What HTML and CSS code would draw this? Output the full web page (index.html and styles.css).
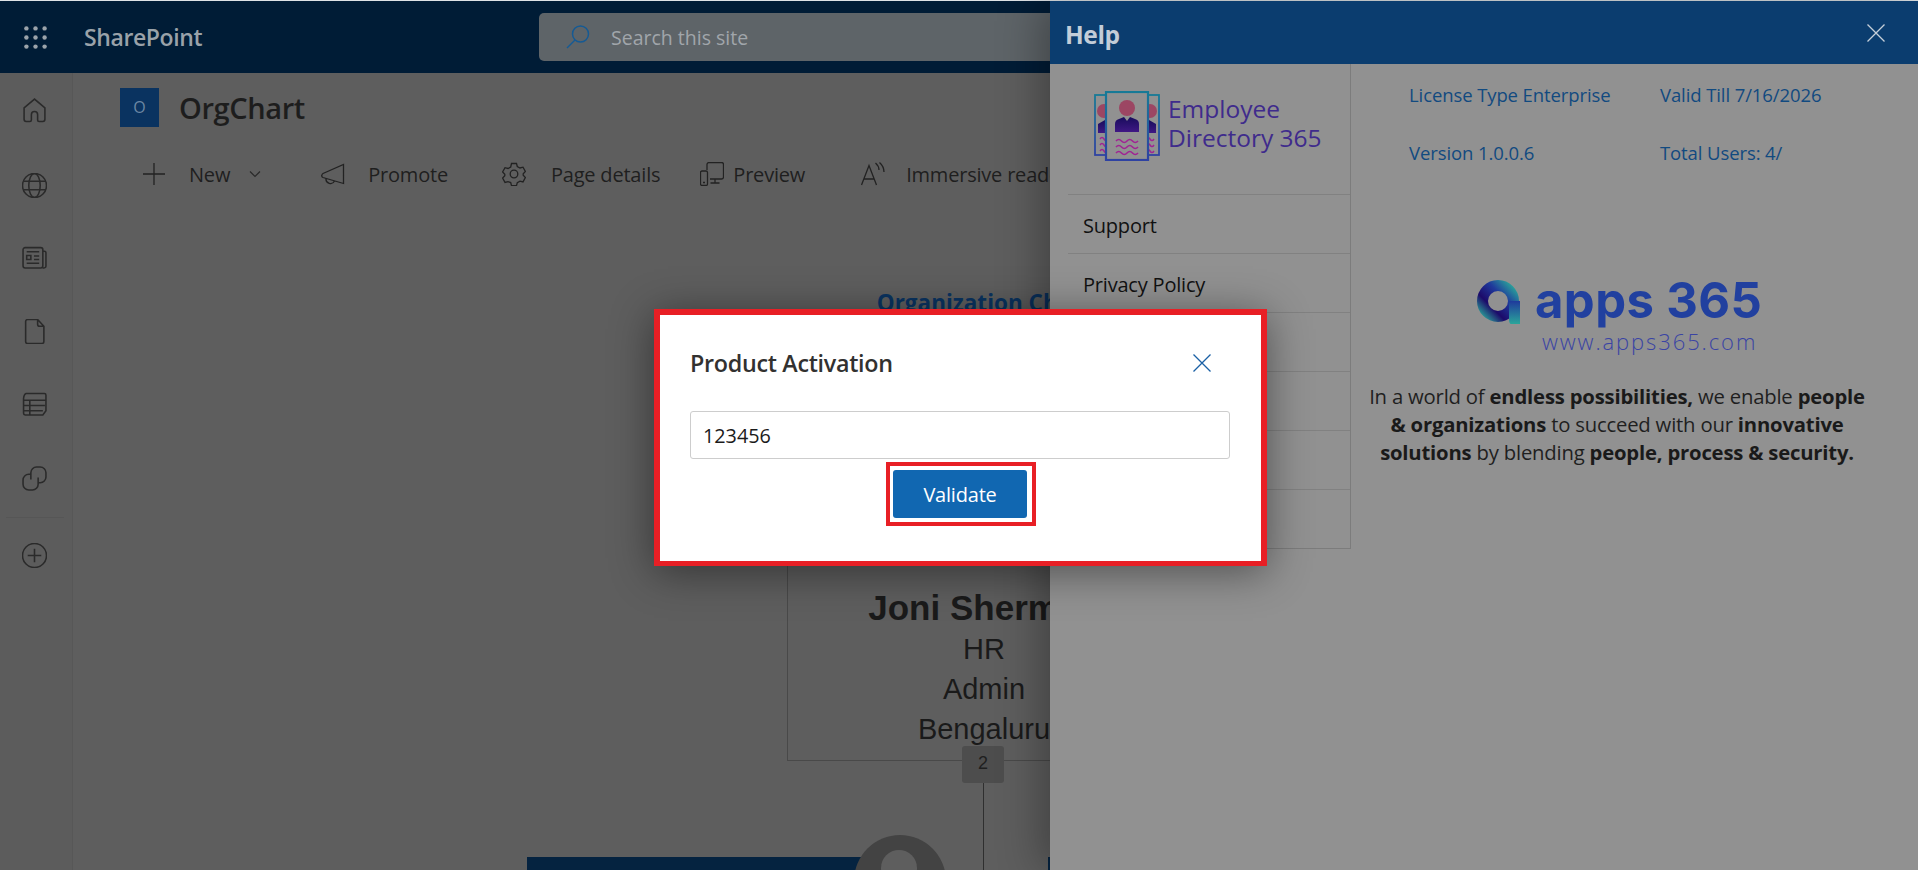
FILE: index.html
```html
<!DOCTYPE html>
<html lang="en">
<head>
<meta charset="utf-8">
<title>OrgChart</title>
<link rel="stylesheet" href="styles.css">
</head>
<body>
<div class="app">
  <header class="topbar">
    <svg class="waffle" viewBox="0 0 24 24"><g fill="currentColor"><circle cx="2.5" cy="2.5" r="2.3"/><circle cx="12" cy="2.5" r="2.3"/><circle cx="21.5" cy="2.5" r="2.3"/><circle cx="2.5" cy="12" r="2.3"/><circle cx="12" cy="12" r="2.3"/><circle cx="21.5" cy="12" r="2.3"/><circle cx="2.5" cy="21.5" r="2.3"/><circle cx="12" cy="21.5" r="2.3"/><circle cx="21.5" cy="21.5" r="2.3"/></g></svg>
    <span class="brand">SharePoint</span>
    <div class="search">
      <svg class="search-icon" viewBox="0 0 24 24" fill="none" stroke="currentColor" stroke-width="1.5"><circle cx="14.5" cy="9" r="8"/><path d="M9 15 1 23"/></svg>
      <span>Search this site</span>
    </div>
  </header>
  <div class="workspace">
    <nav class="rail">
      <div class="rail-item"><svg viewBox="0 0 24 24"><path d="M12 1 2 9.5V20.5a2 2 0 0 0 2 2h3.6a1.4 1.4 0 0 0 1.4-1.4V16a3 3 0 0 1 6 0v5.1a1.4 1.4 0 0 0 1.4 1.4H20a2 2 0 0 0 2-2V9.5Z"/></svg></div>
      <div class="rail-item rail-globe"><svg viewBox="0 0 24 24"><circle cx="12" cy="12" r="11.5"/><ellipse cx="12" cy="12" rx="5.5" ry="11.5"/><path d="M1.5 8h21M1.5 16h21"/></svg></div>
      <div class="rail-item"><svg viewBox="0 0 24 24"><path d="M3 2.500h15a2 2 0 0 1 2 2V20a2 2 0 0 1-2 2H3a2 2 0 0 1-2-2V4.500a2 2 0 0 1 2-2ZM20 6h1.500A1.500 1.500 0 0 1 23 7.500V20a2 2 0 0 1-3 1.800M4.500 6.500h12M4.500 10h4v4h-4ZM11.500 10.500h5M11.500 14h5M4.500 17.500h12"/></svg></div>
      <div class="rail-item"><svg viewBox="0 0 24 24"><path d="M5.500 0.500H15L21 7V21.500a2 2 0 0 1-2 2H5.500a2 2 0 0 1-2-2V2.500a2 2 0 0 1 2-2ZM15 0.500V5a2 2 0 0 0 2 2h4"/></svg></div>
      <div class="rail-item"><svg viewBox="0 0 24 24"><path d="M4 1.500h17.500A1.500 1.500 0 0 1 23 3V18l-3 4H3a1.500 1.500 0 0 1-1.500-1.500V6Q2 2 4 1.500ZM1.500 8H23M1.500 13H22M1.500 18H20M7.500 8V22"/></svg></div>
      <div class="rail-item"><svg viewBox="0 0 24 24"><path d="M8.500 13V6.500A5.500 5.500 0 0 1 14 1h3.500A5.500 5.500 0 0 1 23 6.500v4A5.500 5.500 0 0 1 17.500 16H15M15.500 11v6.500A5.500 5.500 0 0 1 10 23H6.500A5.500 5.500 0 0 1 1 17.500v-4A5.500 5.500 0 0 1 6.500 8H9"/></svg></div>
      <div class="rail-sep"></div>
      <div class="rail-item"><svg viewBox="0 0 24 24"><circle cx="12" cy="12" r="11.500"/><path d="M12 5.500v13M5.500 12h13"/></svg></div>
    </nav>
    <main class="main">
      <div class="site-head">
        <div class="site-logo">O</div>
        <h1 class="site-title">OrgChart</h1>
      </div>
      <div class="cmdbar">
        <div class="cmd cmd-new">
          <svg class="cmd-icon" viewBox="0 0 24 24"><path d="M12 1v22M1 12h22"/></svg>
          <span>New</span>
          <svg class="chev" viewBox="0 0 12 12"><path d="M1 3.500 6 8.500 11 3.500"/></svg>
        </div>
        <div class="cmd cmd-promote">
          <svg class="cmd-icon" viewBox="0 0 24 24"><path d="M22.500 2.500V21.500L2 15.500Q.5 15 .8 13.500 1 12 2 11.500ZM5 16.500A4.500 4.500 0 0 0 13.500 19"/></svg>
          <span>Promote</span>
        </div>
        <div class="cmd cmd-details">
          <svg class="cmd-icon" viewBox="0 0 24 24"><circle cx="12" cy="12" r="3.800"/><path d="M9.500 1.500h5l.8 3 2.700 1.500 3-.8 2.400 4.300-2.200 2.300v1.500l2.200 2.300-2.400 4.300-3-.8-2.700 1.500-.8 3h-5l-.8-3L6 19.600l-3 .8L.6 16.100l2.200-2.300v-1.500L.6 10l2.400-4.300 3 .8 2.700-1.500Z"/></svg>
          <span>Page details</span>
        </div>
        <div class="cmd cmd-preview">
          <svg class="cmd-icon" viewBox="0 0 24 24"><path d="M7 8V2.500a2 2 0 0 1 2-2h12.500a2 2 0 0 1 2 2V15a2 2 0 0 1-2 2H10M15 17v4M10.500 21h9M2 9h4a1.500 1.500 0 0 1 1.500 1.500V22A1.500 1.500 0 0 1 6 23.500H2A1.500 1.500 0 0 1 .5 22V10.500A1.500 1.500 0 0 1 2 9ZM3 20.500h2"/></svg>
          <span>Preview</span>
        </div>
        <div class="cmd cmd-reader">
          <svg class="cmd-icon" viewBox="0 0 24 24"><path d="M.5 23 8 3.500 15.500 23M3 17h10M14.500 1q3.500 3 3.500 7M18.500 .5q4.500 4 4.500 9.500"/></svg>
          <span>Immersive reader</span>
        </div>
      </div>
      <section class="chart">
        <h2 class="chart-title">Organization Chart</h2>
        <div class="node-root">
          <div class="node-name">Joni Sherman</div>
          <div class="node-line">HR</div>
          <div class="node-line">Admin</div>
          <div class="node-line">Bengaluru</div>
          <div class="badge">2</div>
        </div>
        <div class="connector"></div>
        <div class="child-bar"></div>
        <div class="child-bar-next"></div>
        <svg class="avatar" viewBox="0 0 92 92"><circle cx="46" cy="46" r="46" fill="#434343"/><circle cx="45" cy="33" r="18" fill="#5e5e5e"/></svg>
      </section>
    </main>
  </div>

  <aside class="panel">
    <div class="panel-head">
      <span class="panel-title">Help</span>
      <svg class="panel-close" viewBox="0 0 18 18"><path d="M.5.5 17.500 17.500M17.500.5.5 17.500"/></svg>
    </div>
    <div class="panel-body">
      <div class="panel-menu">
        <div class="product">
          <svg class="product-icon" viewBox="0 0 66 70">
            <defs>
              <linearGradient id="frame" x1="0" y1="0" x2="0" y2="1"><stop offset="0" stop-color="#177a96"/><stop offset="1" stop-color="#2f42a2"/></linearGradient>
              <linearGradient id="suit" x1="0" y1="0" x2="0" y2="1"><stop offset="0" stop-color="#180c5c"/><stop offset="1" stop-color="#3f1884"/></linearGradient>
            </defs>
            <rect x="1" y="4" width="52" height="60" fill="none" stroke="url(#frame)" stroke-width="1.800"/>
            <rect x="13" y="4" width="52" height="60" fill="none" stroke="url(#frame)" stroke-width="1.800"/>
            <path d="M4 42V33l7-4 4 0v13ZM62 42V33l-7-4-4 0v13Z" fill="url(#suit)"/>
            <circle cx="10" cy="20" r="7" fill="#9c4663"/><circle cx="56" cy="20" r="7" fill="#9c4663"/>
            <path d="M6 48q2-3 4 0t4 0M6 54q2-3 4 0t4 0M6 60q2-3 4 0t4 0M52 48q2-3 4 0t4 0M52 54q2-3 4 0t4 0M52 60q2-3 4 0t4 0" fill="none" stroke="#a02494" stroke-width="1.500"/>
            <rect x="12" y="1" width="42" height="68" fill="#919191" stroke="url(#frame)" stroke-width="2.200"/>
            <circle cx="33" cy="17" r="8" fill="#9c4663"/>
            <path d="M21 41V33q0-4 4-5l5-2 3 4 3-4 5 2q4 1 4 5v8Z" fill="url(#suit)"/>
            <path d="M22 50q2.750-3 5.500 0t5.500 0 5.500 0 5.500 0M22 56q2.750-3 5.500 0t5.500 0 5.500 0 5.500 0M22 62q2.750-3 5.500 0t5.500 0 5.500 0 5.500 0" fill="none" stroke="#a02494" stroke-width="1.600"/>
          </svg>
          <div class="product-name">Employee<br>Directory 365</div>
        </div>
        <div class="menu-row">Support</div>
        <div class="menu-row">Privacy Policy</div>
        <div class="menu-row"></div>
        <div class="menu-row"></div>
        <div class="menu-row"></div>
        <div class="menu-row"></div>
      </div>
      <div class="panel-info">
        <div class="license">
          <span>License Type Enterprise</span>
          <span>Valid Till 7/16/2026</span>
          <span>Version 1.0.0.6</span>
          <span>Total Users: 4/</span>
        </div>
        <div class="apps-logo">
          <svg class="apps-mark" viewBox="0 0 44 44">
            <defs>
              <linearGradient id="ring" x1="1" y1="0" x2="0" y2="1"><stop offset="0" stop-color="#2aa59a"/><stop offset=".35" stop-color="#1f3a9c"/><stop offset=".7" stop-color="#1c0a6a"/><stop offset="1" stop-color="#2a9a96"/></linearGradient>
              <linearGradient id="tail" x1="0" y1="0" x2="0" y2="1"><stop offset="0" stop-color="#1f3a9c"/><stop offset="1" stop-color="#2aa59a"/></linearGradient>
            </defs>
            <circle cx="21" cy="21" r="15.500" fill="none" stroke="url(#ring)" stroke-width="11"/>
            <path d="M32 21H43V44H34Q32 44 32 38Z" fill="url(#tail)"/>
          </svg>
          <div class="apps-text">
            <div class="apps-word">apps 365</div>
            <div class="apps-url">www.apps365.com</div>
          </div>
        </div>
        <p class="tagline">In a world of <b>endless possibilities,</b> we enable <b>people &amp; organizations</b> to succeed with our <b>innovative solutions</b> by blending <b>people, process &amp; security.</b></p>
      </div>
    </div>
  </aside>

  <div class="dialog">
    <div class="dialog-head">
      <span class="dialog-title">Product Activation</span>
      <svg class="dialog-close" viewBox="0 0 18 18"><path d="M.5.5 17.500 17.500M17.500.5.5 17.500"/></svg>
    </div>
    <div class="key-input">123456</div>
    <div class="validate-mark"><button class="validate">Validate</button></div>
  </div>
</div>
</body>
</html>
```

FILE: styles.css
```css
* { box-sizing: border-box; }
html, body { margin: 0; padding: 0; }
body {
  width: 1918px;
  height: 870px;
  overflow: hidden;
  background: #dfe3e6;
  font-family: "Open Sans", "Noto Sans", sans-serif;
}
.app {
  position: relative;
  width: 1918px;
  height: 870px;
  padding-top: 1px;
  overflow: hidden;
}
.topbar {
  height: 72px;
  background: #001c36;
  display: flex;
  align-items: center;
  padding-left: 24px;
  color: #9fa7ae;
}
.waffle { width: 23px; height: 23px; color: #9ba3aa; flex: none; }
.brand {
  margin-left: 37px;
  font-size: 23px;
  font-weight: 600;
  letter-spacing: -0.4px;
  color: #9aa2a9;
  width: 118px;
}
.search {
  margin-left: 337px;
  width: 700px;
  height: 48px;
  background: #5e6468;
  border-radius: 5px;
  display: flex;
  align-items: center;
  padding-left: 27px;
  gap: 21px;
  font-size: 19.500px;
  color: #a1a6ab;
}
.search-icon { width: 24px; height: 24px; color: #155a94; flex: none; }
.workspace {
  display: flex;
  height: 797px;
  background: #5e5e5e;
}
.rail {
  width: 73px;
  flex: none;
  background: #5c5c5c;
  border-right: 1px solid #575757;
}
.rail-item {
  height: 73.6px;
  display: flex;
  align-items: center;
  justify-content: center;
  padding: 1px 3px 0 0;
}
.rail-globe { padding-top: 4px; }
.rail-item svg {
  width: 25px;
  height: 25px;
  fill: none;
  stroke: #2a2a2a;
  stroke-width: 1.500;
}
.rail-sep {
  height: 1px;
  margin: 2.500px 8px 0 6px;
  background: #565656;
}
.main { flex: 1; min-width: 0; }
.site-head {
  display: flex;
  align-items: center;
  padding: 14px 0 0 47px;
}
.site-logo {
  width: 39px;
  height: 39px;
  background: #0a3360;
  color: #6c87a3;
  font-size: 16px;
  display: flex;
  align-items: center;
  justify-content: center;
}
.site-title {
  margin: 1px 0 0 20px;
  font-size: 29px;
  line-height: 39px;
  font-weight: 600;
  letter-spacing: -0.4px;
  color: #1d1d1d;
}
.cmdbar {
  display: flex;
  align-items: center;
  height: 24px;
  margin-top: 35px;
  margin-bottom: 1px;
  padding-left: 69px;
  font-size: 20px;
  letter-spacing: -0.2px;
  color: #1f1f1f;
  white-space: nowrap;
}
.cmd { display: flex; align-items: center; flex: none; }
.cmd-icon {
  width: 24px;
  height: 24px;
  fill: none;
  stroke: #222;
  stroke-width: 1.300;
  flex: none;
}
.chev {
  width: 12px;
  height: 12px;
  margin-left: 19px;
  fill: none;
  stroke: #2a2a2a;
  stroke-width: 1.200;
}
.cmd-new span { margin-left: 23px; }
.cmd-promote { margin-left: 60px; }
.cmd-promote span { margin-left: 23px; }
.cmd-details { margin-left: 54px; }
.cmd-details span { margin-left: 25px; }
.cmd-preview { margin-left: 40px; }
.cmd-preview span { margin-left: 9px; }
.cmd-reader { margin-left: 56px; }
.cmd-reader span { margin-left: 21px; }

/* organisation chart: a free diagram canvas */
.chart {
  position: relative;
  height: 683px;
  overflow: hidden;
}
.chart-title {
  position: absolute;
  left: 714px;
  top: 102px;
  width: 394px;
  margin: 0;
  text-align: center;
  font-size: 22.500px;
  font-weight: 700;
  color: #0a3360;
  line-height: 28px;
}
.node-root {
  position: absolute;
  left: 714px;
  top: 233px;
  width: 394px;
  height: 341px;
  border: 1px solid #494949;
  font-family: "Liberation Sans", Arial, sans-serif;
  text-align: center;
  color: #1a1a1a;
  padding-top: 167px;
}
.node-name { font-size: 35px; font-weight: 700; line-height: 40px; margin-bottom: 1px; }
.node-line { font-size: 29px; line-height: 40px; }
.badge {
  position: absolute;
  left: 174px;
  top: 325px;
  width: 42px;
  height: 37px;
  background: #4d4d4d;
  border-radius: 3px;
  font-size: 18px;
  line-height: 34px;
  color: #1f1f1f;
}
.connector {
  position: absolute;
  left: 910px;
  top: 596px;
  bottom: 0;
  width: 1px;
  background: #2f2f2f;
}
.child-bar {
  position: absolute;
  left: 454px;
  top: 670px;
  width: 380px;
  height: 20px;
  background: #052340;
}
.child-bar-next {
  position: absolute;
  left: 975px;
  top: 670px;
  width: 100px;
  height: 20px;
  background: #052340;
}
.avatar {
  position: absolute;
  left: 781px;
  top: 648px;
  width: 92px;
  height: 92px;
}

/* help panel */
.panel {
  position: absolute;
  left: 1050px;
  top: 1px;
  right: 0;
  bottom: 0;
  background: #919191;
  box-shadow: -10px 0 40px rgba(0, 0, 0, .3);
  display: flex;
  flex-direction: column;
}
.panel-head {
  height: 63px;
  flex: none;
  background: #0b3d6f;
  display: flex;
  align-items: center;
  justify-content: space-between;
  padding: 3px 33px 0 15px;
}
.panel-title {
  font-size: 24.500px;
  font-weight: 700;
  letter-spacing: -0.4px;
  color: #c3cdd8;
}
.panel-close { width: 18px; height: 18px; margin-top: -3px; fill: none; stroke: #c5cfd9; stroke-width: 1.300; }
.panel-body { display: flex; flex: 1; align-items: flex-start; }
.panel-menu {
  width: 301px;
  flex: none;
  border-right: 1px solid #7c7c7c;
  border-bottom: 1px solid #7c7c7c;
  padding-left: 18px;
  font-size: 20px;
  color: #111;
  letter-spacing: -0.2px;
}
.product {
  height: 130px;
  display: flex;
  gap: 8px;
  padding: 27px 0 0 26px;
}
.product-icon { width: 66px; height: 70px; flex: none; }
.product-name {
  font-size: 24.500px;
  line-height: 29px;
  letter-spacing: 0;
  color: #3f2b8c;
  margin-top: 3px;
  white-space: nowrap;
}
.menu-row {
  height: 59px;
  border-top: 1px solid #818181;
  padding: 3px 0 0 15px;
  display: flex;
  align-items: center;
}
.panel-info { flex: 1; min-width: 0; }
.license {
  display: grid;
  grid-template-columns: 251px 1fr;
  row-gap: 31px;
  padding: 17px 0 0 58px;
  font-size: 18.500px;
  line-height: 27px;
  letter-spacing: -0.1px;
  color: #114a80;
}
.apps-logo {
  display: flex;
  align-items: flex-start;
  margin: 114px 0 0 126px;
  gap: 14px;
}
.apps-mark { width: 44px; height: 44px; flex: none; }
.apps-word {
  font-family: "Inter", "Open Sans", sans-serif;
  font-size: 49px;
  font-weight: 700;
  line-height: 48px;
  color: #21409f;
  letter-spacing: .4px;
  margin-top: -3px;
  white-space: nowrap;
}
.apps-url {
  margin: 3px 0 0 7px;
  font-size: 22px;
  font-weight: 300;
  line-height: 26px;
  letter-spacing: 1.900px;
  color: #3a44a4;
  white-space: nowrap;
}
.tagline {
  width: 510px;
  margin: 28px 0 0 11px;
  text-align: center;
  font-size: 20.300px;
  line-height: 28px;
  letter-spacing: -0.2px;
  color: #1f1f1f;
}
.tagline b { font-weight: 700; color: #1a1a1a; }

/* activation dialog */
.dialog {
  position: absolute;
  left: 654px;
  top: 309px;
  width: 613px;
  height: 257px;
  background: #fff;
  border: 6px solid #e81f25;
  border-bottom-width: 5px;
  padding: 0 31px 0 30px;
  box-shadow: 0 6px 40px rgba(0, 0, 0, .45);
}
.dialog-head {
  display: flex;
  align-items: center;
  justify-content: space-between;
  height: 96px;
  padding: 0 19px 0 0;
}
.dialog-title {
  font-size: 23.300px;
  font-weight: 600;
  letter-spacing: -0.3px;
  color: #323130;
}
.dialog-close { width: 18px; height: 18px; fill: none; stroke: #1a60a5; stroke-width: 1.300; }
.key-input {
  height: 48px;
  border: 1px solid #cdcdcd;
  border-radius: 3px;
  padding: 1px 0 0 12px;
  display: flex;
  align-items: center;
  font-size: 19.800px;
  color: #1b1b1b;
}
.validate-mark {
  width: 150px;
  height: 64px;
  margin: 3px 0 0 196px;
  border: 4px solid #e81f25;
  padding: 4px 3px;
}
.validate {
  display: block;
  width: 134px;
  height: 48px;
  border: 0;
  border-radius: 3px;
  background: #1167b1;
  color: #fff;
  font-family: inherit;
  font-size: 20px;
  font-weight: 500;
  letter-spacing: -0.2px;
}
```
